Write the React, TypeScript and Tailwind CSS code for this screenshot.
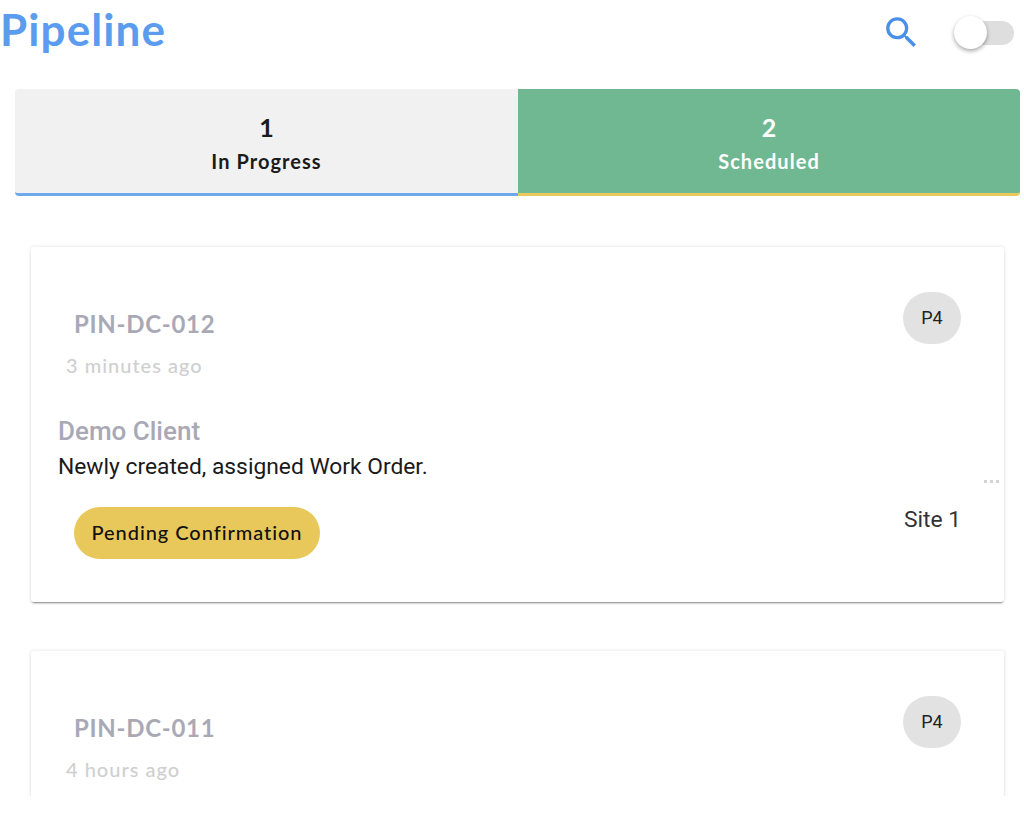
import React from "react";

const lato = "font-['Lato','Open_Sans',sans-serif]";
const roboto = "font-['Roboto','Liberation_Sans',sans-serif]";

const orders = [
  {
    id: "PIN-DC-012",
    time: "3 minutes ago",
    client: "Demo Client",
    note: "Newly created, assigned Work Order.",
    status: "Pending Confirmation",
    site: "Site 1",
  },
  { id: "PIN-DC-011", time: "4 hours ago" },
];

function Tab({ count, label, active }: { count: number; label: string; active?: boolean }) {
  return (
    <div
      className={
        active
          ? "flex-1 h-[107px] flex flex-col items-center pt-[23px] bg-[#70b891] border-b-[3px] border-[#e9c85c] rounded-tr-[4px] rounded-br-[4px] text-white"
          : "flex-1 h-[107px] flex flex-col items-center pt-[23px] bg-[#f1f1f1] border-b-[3px] border-[#70a8ee] rounded-tl-[4px] rounded-bl-[4px] text-[#1b1b1b]"
      }
    >
      <div className={`${lato} text-[25px] leading-[30px] font-bold`}>{count}</div>
      <div className={`${lato} text-[20px] leading-[24px] mt-[7px] font-bold tracking-[1.05px]`}>{label}</div>
    </div>
  );
}

function Card({ order }: { order: (typeof orders)[number] }) {
  return (
    <div className="relative w-[973px] ml-[31px] mb-[49px] shrink-0 bg-white rounded-[3px] shadow-[0_0_4px_rgba(0,0,0,0.12),0_2px_2px_-1px_rgba(0,0,0,0.45)] pl-[27px] pr-[43px] pt-[45px] pb-[43px]">
      <div className="flex justify-between items-start">
        <div>
          <div className={`${lato} ml-[16px] mt-[17px] text-[24px] leading-[30px] font-bold tracking-[0.7px] text-[#a9a9b6]`}>{order.id}</div>
          <div className={`${lato} ml-[8px] mt-[14px] text-[20px] leading-[24px] font-medium tracking-[1px] text-[#cfcfcf]`}>{order.time}</div>
        </div>
        <div className={`${roboto} w-[58px] h-[52px] pb-[2px] rounded-full bg-[#e2e2e2] flex items-center justify-center text-[18px] text-[#222]`}>
          P4
        </div>
      </div>
      {order.client && (
        <>
          <div className={`${roboto} mt-[39px] text-[26px] leading-[30px] font-medium text-[#a9a9b6]`}>{order.client}</div>
          <div className={`${roboto} mt-[9px] text-[22.8px] leading-[24px] text-[#1a1a1a]`}>{order.note}</div>
          <div className="flex justify-between items-start mt-[28px]">
            <div className={`${lato} ml-[16px] w-[246px] h-[52px] pb-[3px] rounded-full bg-[#e8c85a] flex items-center justify-center text-[20px] font-medium tracking-[0.95px] text-[#111]`}>
              {order.status}
            </div>
            <div className={`${roboto} mt-[1px] text-[22.8px] leading-[24px] text-[#333]`}>{order.site}</div>
          </div>
          <div className="absolute right-[5px] top-[233px] flex gap-[3px]">
            <span className="w-[3px] h-[3px] bg-[#d4d4d4]" />
            <span className="w-[3px] h-[3px] bg-[#d4d4d4]" />
            <span className="w-[3px] h-[3px] bg-[#d4d4d4]" />
          </div>
        </>
      )}
    </div>
  );
}

export default function App() {
  return (
    <div className="w-[1024px] h-[836px] bg-white overflow-hidden">
      <div className="h-[796px] overflow-hidden flex flex-col">
        <div className="h-[89px] shrink-0 flex items-start justify-between pr-[10px]">
          <h1 className={`${lato} text-[44px] leading-[59px] font-bold tracking-[1.1px] text-[#5b9cee]`}>Pipeline</h1>
          <div className="flex items-center gap-[42px] mt-[12px]">
            <svg width="41" height="41" viewBox="0 0 24 24" fill="#4a90e8">
              <path d="M15.5 14h-.79l-.28-.27A6.47 6.47 0 0 0 16 9.5 6.5 6.5 0 1 0 9.5 16c1.61 0 3.09-.59 4.23-1.57l.27.28v.79l5 4.99L20.49 19l-4.99-5zm-6 0C7.01 14 5 11.99 5 9.5S7.01 5 9.5 5 14 7.01 14 9.5 11.99 14 9.5 14z" />
            </svg>
            <div className="relative w-[50px] h-[24px] rounded-full bg-[#dedede]">
              <div className="absolute left-[-10px] top-[-5px] w-[33px] h-[33px] rounded-full bg-white shadow-[0_2px_4px_rgba(0,0,0,0.35)]" />
            </div>
          </div>
        </div>
        <div className="flex shrink-0 ml-[15px] w-[1005px]">
          <div className="w-[503px] flex"><Tab count={1} label="In Progress" /></div>
          <div className="flex-1 flex"><Tab count={2} label="Scheduled" active /></div>
        </div>
        <div className="mt-[51px] flex flex-col">
          {orders.map((o) => (
            <Card key={o.id} order={o} />
          ))}
        </div>
      </div>
    </div>
  );
}
